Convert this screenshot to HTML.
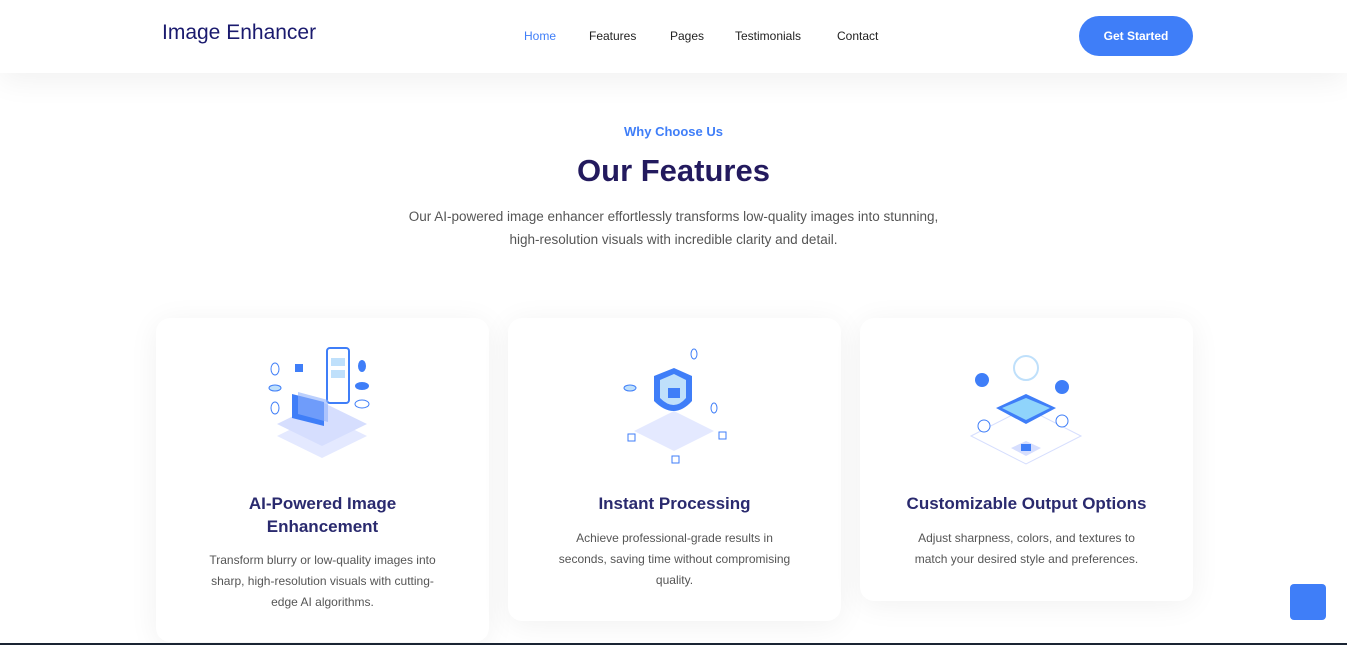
<!DOCTYPE html>
<html><head><meta charset="utf-8"><style>
*{margin:0;padding:0;box-sizing:border-box}
body{width:1347px;height:645px;overflow:hidden;background:#fff;font-family:"Liberation Sans",sans-serif;position:relative}
.hdr{position:absolute;left:0;top:0;width:1347px;height:73px;background:#fff;box-shadow:0 8px 30px rgba(0,0,0,0.06);z-index:2}
.logo{position:absolute;left:162px;top:21px;font-size:21px;color:#1a1a6e}
.nav a{position:absolute;top:29px;font-size:12px;color:#222;text-decoration:none}
.btn{position:absolute;left:1079px;top:16px;width:114px;height:40px;border-radius:20px;background:#3f7ef8;color:#fff;font-size:12px;font-weight:bold;text-align:center;line-height:40px}
.sub{position:absolute;top:124px;width:100%;text-align:center;color:#3f7ef8;font-size:13px;font-weight:bold}
h1{position:absolute;top:153px;width:100%;text-align:center;color:#231a5e;font-size:31px}
.desc{position:absolute;top:205px;width:100%;text-align:center;color:#555;font-size:13.5px;line-height:23px}
.card{position:absolute;top:318px;width:333px;background:#fff;border-radius:14px;box-shadow:0 4px 30px rgba(0,0,0,0.06);text-align:center}
.card h3{position:absolute;top:174px;left:0;width:100%;font-size:17px;color:#2a2a6e;line-height:23px}
.card p{position:absolute;left:46px;width:241px;font-size:12px;color:#555;line-height:21px}
.card svg{position:absolute;left:106px;top:28px}
.up{position:absolute;left:1290px;top:584px;width:36px;height:36px;border-radius:4px;background:#3f7ef8}
.bar{position:absolute;left:0;top:643px;width:1347px;height:2px;background:#1a2433}
</style></head><body>
<div class="hdr">
<div class="logo">Image Enhancer</div>
<div class="nav"><a style="left:524px;color:#3f7ef8">Home</a><a style="left:589px">Features</a><a style="left:670px">Pages</a><a style="left:735px">Testimonials</a><a style="left:837px">Contact</a></div>
<div class="btn">Get Started</div>
</div>
<div class="sub">Why Choose Us</div>
<h1>Our Features</h1>
<div class="desc">Our AI-powered image enhancer effortlessly transforms low-quality images into stunning,<br>high-resolution visuals with incredible clarity and detail.</div>

<div class="card" style="left:156px;height:324px">
<svg width="120" height="125" viewBox="0 0 120 125"><polygon points="15,90 60,68 105,90 60,112" fill="#e4e9ff"/><polygon points="15,78 60,56 105,78 60,100" fill="#d6defe"/><rect x="65" y="2" width="22" height="55" rx="3" fill="#fff" stroke="#3f7ef8" stroke-width="2"/><rect x="69" y="12" width="14" height="8" fill="#bfe0fb"/><rect x="69" y="24" width="14" height="8" fill="#bfe0fb"/><polygon points="30,48 62,56 62,80 30,72" fill="#3f7ef8"/><polygon points="36,46 66,54 66,76 36,68" fill="#8fb1fb" opacity=".6"/><ellipse cx="13" cy="23" rx="4" ry="6" fill="none" stroke="#3f7ef8"/><ellipse cx="13" cy="42" rx="6" ry="3" fill="#bfe0fb" stroke="#3f7ef8"/><ellipse cx="13" cy="62" rx="4" ry="6" fill="none" stroke="#3f7ef8"/><rect x="33" y="18" width="8" height="8" fill="#3f7ef8"/><ellipse cx="100" cy="20" rx="4" ry="6" fill="#3f7ef8"/><ellipse cx="100" cy="40" rx="7" ry="4" fill="#3f7ef8"/><ellipse cx="100" cy="58" rx="7" ry="4" fill="none" stroke="#3f7ef8"/></svg>
<h3>AI-Powered Image<br>Enhancement</h3>
<p style="top:232px">Transform blurry or low-quality images into sharp, high-resolution visuals with cutting-edge AI algorithms.</p>
</div>

<div class="card" style="left:508px;height:303px">
<svg width="120" height="125" viewBox="0 0 120 125"><polygon points="20,85 60,65 100,85 60,105" fill="#e4e9ff"/><path d="M40,30 L60,22 L78,30 L78,55 Q60,75 40,55Z" fill="#3f7ef8"/><path d="M46,34 L60,28 L72,34 L72,52 Q60,66 46,52Z" fill="#bfe0fb"/><rect x="54" y="42" width="12" height="10" fill="#3f7ef8"/><ellipse cx="16" cy="42" rx="6" ry="3" fill="#bfe0fb" stroke="#3f7ef8"/><ellipse cx="80" cy="8" rx="3" ry="5" fill="none" stroke="#3f7ef8"/><ellipse cx="100" cy="62" rx="3" ry="5" fill="none" stroke="#3f7ef8"/><rect x="58" y="110" width="7" height="7" fill="none" stroke="#3f7ef8"/><rect x="14" y="88" width="7" height="7" fill="none" stroke="#3f7ef8"/><rect x="105" y="86" width="7" height="7" fill="none" stroke="#3f7ef8"/></svg>
<h3>Instant Processing</h3>
<p style="top:210px">Achieve professional-grade results in seconds, saving time without compromising quality.</p>
</div>

<div class="card" style="left:860px;height:283px">
<svg width="120" height="125" viewBox="0 0 120 125"><polygon points="5,90 60,62 115,90 60,118" fill="none" stroke="#d6defe"/><polygon points="30,62 60,48 90,62 60,78" fill="#3f7ef8"/><polygon points="36,62 60,52 84,62 60,74" fill="#8fd4fb"/><circle cx="60" cy="22" r="12" fill="#fff" stroke="#bfe0fb" stroke-width="2"/><circle cx="16" cy="34" r="7" fill="#3f7ef8"/><circle cx="96" cy="41" r="7" fill="#3f7ef8"/><circle cx="18" cy="80" r="6" fill="#fff" stroke="#3f7ef8"/><circle cx="96" cy="75" r="6" fill="#fff" stroke="#3f7ef8"/><polygon points="45,102 60,95 75,102 60,110" fill="#d6defe"/><rect x="55" y="98" width="10" height="7" fill="#3f7ef8"/></svg>
<h3>Customizable Output Options</h3>
<p style="top:210px">Adjust sharpness, colors, and textures to match your desired style and preferences.</p>
</div>
<div class="up"></div>
<div class="bar"></div>
</body></html>
